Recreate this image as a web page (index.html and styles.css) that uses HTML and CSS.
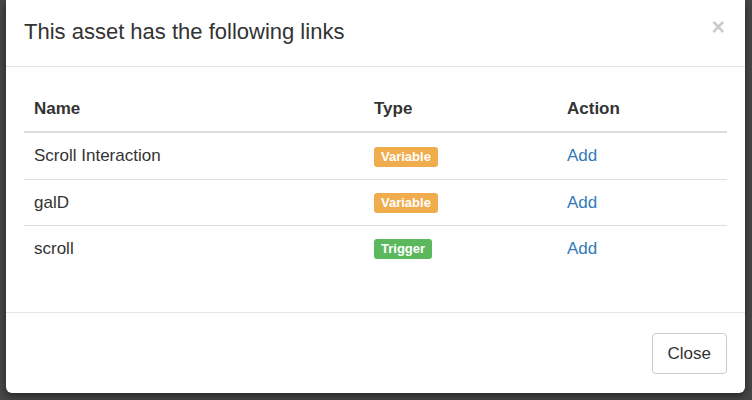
FILE: index.html
```html
<!DOCTYPE html>
<html lang="en">
<head>
    <meta charset="UTF-8">
    <meta name="viewport" content="width=device-width, initial-scale=1.0">
    <title>Asset links</title>
    <link rel="stylesheet" href="styles.css">
</head>
<body>
    <div class="modal">
        <div class="modal-header">
            <h4 class="modal-title">This asset has the following links</h4>
            <button class="close" type="button">&times;</button>
        </div>

        <div class="modal-body">
            <table class="links">
                <thead>
                    <tr>
                        <th class="col-name">Name</th>
                        <th class="col-type">Type</th>
                        <th>Action</th>
                    </tr>
                </thead>
                <tbody>
                    <tr>
                        <td>Scroll Interaction</td>
                        <td><span class="label label-warning">Variable</span></td>
                        <td><a href="#">Add</a></td>
                    </tr>
                    <tr>
                        <td>galD</td>
                        <td><span class="label label-warning">Variable</span></td>
                        <td><a href="#">Add</a></td>
                    </tr>
                    <tr>
                        <td>scroll</td>
                        <td><span class="label label-success">Trigger</span></td>
                        <td><a href="#">Add</a></td>
                    </tr>
                </tbody>
            </table>
        </div>

        <div class="modal-footer">
            <button class="btn" type="button">Close</button>
        </div>
    </div>
</body>
</html>
```

FILE: styles.css
```css
body {
    margin: 0;
    padding: 0 7px 7px 6px;
    background-color: #474747;
    font-family: "Liberation Sans", Arial, sans-serif;
    color: #333;
}
.modal {
    background: #fff;
    border-radius: 0 0 6px 6px;
    box-shadow: 0 3px 9px rgba(0, 0, 0, 0.5);
}
.modal-header {
    display: flex;
    justify-content: space-between;
    align-items: center;
    height: 66px;
    padding: 0 20px 0 18px;
    border-bottom: 1px solid #e5e5e5;
}
.modal-title {
    margin: 0 0 2px;
    font-size: 22px;
    font-weight: normal;
    color: #333;
}
.close {
    align-self: flex-start;
    margin-top: 16px;
    padding: 0;
    border: 0;
    background: none;
    font-family: "Liberation Sans", Arial, sans-serif;
    font-size: 23px;
    font-weight: bold;
    line-height: 1;
    color: #000;
    opacity: 0.2;
}
.modal-body {
    padding: 20px 18px 41px 18px;
    border-bottom: 1px solid #e5e5e5;
}
.links {
    width: 100%;
    border-collapse: collapse;
    font-size: 17px;
}
.links th {
    height: 44px;
    padding: 0 10px;
    text-align: left;
    font-weight: bold;
    color: #333;
    border-bottom: 2px solid #ddd;
}
.links .col-name {
    width: 320px;
}
.links .col-type {
    width: 173px;
}
.links td {
    height: 45px;
    padding: 0 10px;
    border-top: 1px solid #ddd;
}
.links tbody tr:first-child td {
    border-top: 0;
    height: 46px;
}
.links a {
    color: #337ab7;
    text-decoration: none;
}
.label {
    display: inline-block;
    padding: 3px 7px;
    border-radius: 3px;
    font-size: 13px;
    font-weight: bold;
    line-height: 14px;
    color: #fff;
}
.label-warning {
    background-color: #f0ad4e;
}
.label-success {
    background-color: #5cb85c;
}
.modal-footer {
    display: flex;
    justify-content: flex-end;
    padding: 20px 18px 19px;
}
.btn {
    height: 41px;
    padding: 0 15px;
    border: 1px solid #ccc;
    border-radius: 4px;
    background: #fff;
    font-family: "Liberation Sans", Arial, sans-serif;
    font-size: 17px;
    color: #333;
}
```
